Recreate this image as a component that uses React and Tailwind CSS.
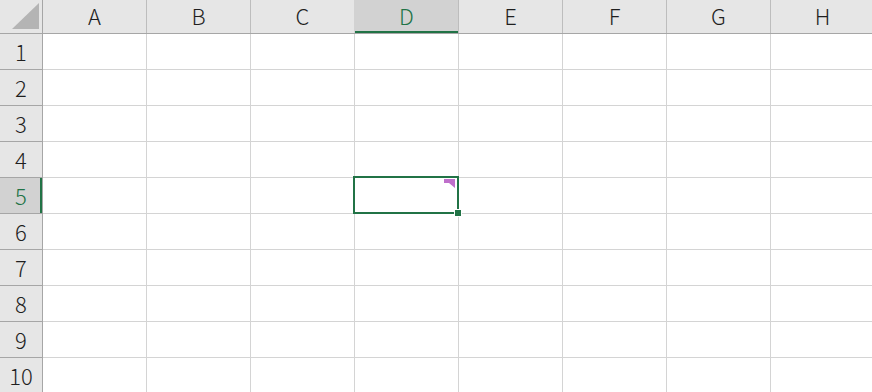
const COLS = ["A", "B", "C", "D", "E", "F", "G", "H"];
const ROWS = [1, 2, 3, 4, 5, 6, 7, 8, 9, 10];
const ACTIVE_COL = "D";
const ACTIVE_ROW = 5;

const font = { fontFamily: '"Noto Sans CJK JP", "Noto Sans", sans-serif' };

export default function App() {
  return (
    <div
      className="relative w-[872px] h-[392px] overflow-hidden bg-white text-[#1f1f1f] font-light"
      style={font}
    >
      {/* Column headers */}
      <div className="flex h-[34px] border-b border-[#a6a6a6] bg-[#e6e6e6]">
        <div className="relative w-[43px] shrink-0 border-r border-[#a6a6a6]">
          <svg className="absolute left-0 top-0" width="42" height="33">
            <polygon points="39,3 39,29 12,29" fill="#b4b4b4" />
          </svg>
        </div>
        {COLS.map((c) => (
          <div
            key={c}
            className={
              c === ACTIVE_COL
                ? "w-[104px] shrink-0 flex items-center justify-center pb-[3px] border-r border-[#bdbdbd] bg-[#d2d2d2] text-[#217346] text-[22px] shadow-[inset_0_-2px_0_#217346,-1px_0_0_#d2d2d2]"
                : "w-[104px] shrink-0 flex items-center justify-center pb-[3px] border-r border-[#bdbdbd] text-[22px]"
            }
          >
            {c}
          </div>
        ))}
      </div>

      {/* Rows */}
      {ROWS.map((r) => (
        <div key={r} className="flex h-[36px]">
          <div
            className={
              r === ACTIVE_ROW
                ? "w-[43px] shrink-0 flex items-center justify-center border-r border-b border-[#a6a6a6] bg-[#d2d2d2] text-[#217346] text-[22px] shadow-[inset_-2px_0_0_#217346]"
                : "w-[43px] shrink-0 flex items-center justify-center border-r border-b border-[#a6a6a6] bg-[#e6e6e6] text-[22px]"
            }
          >
            {r}
          </div>
          {COLS.map((c) => (
            <div
              key={c}
              className="w-[104px] shrink-0 border-r border-b border-[#d4d4d4]"
            />
          ))}
        </div>
      ))}

      {/* Active cell D5 */}
      <div className="absolute left-[353px] top-[176px] w-[106px] h-[38px] border-2 border-[#217346]">
        <svg className="absolute right-[1px] top-[1px]" width="12" height="10">
          <polygon points="0,0 11,0 11,9 5,4 0,4" fill="#bf6fcb" />
        </svg>
      </div>
      <div className="absolute left-[454px] top-[209px] w-[8px] h-[8px] border border-white bg-[#217346]" />
    </div>
  );
}
